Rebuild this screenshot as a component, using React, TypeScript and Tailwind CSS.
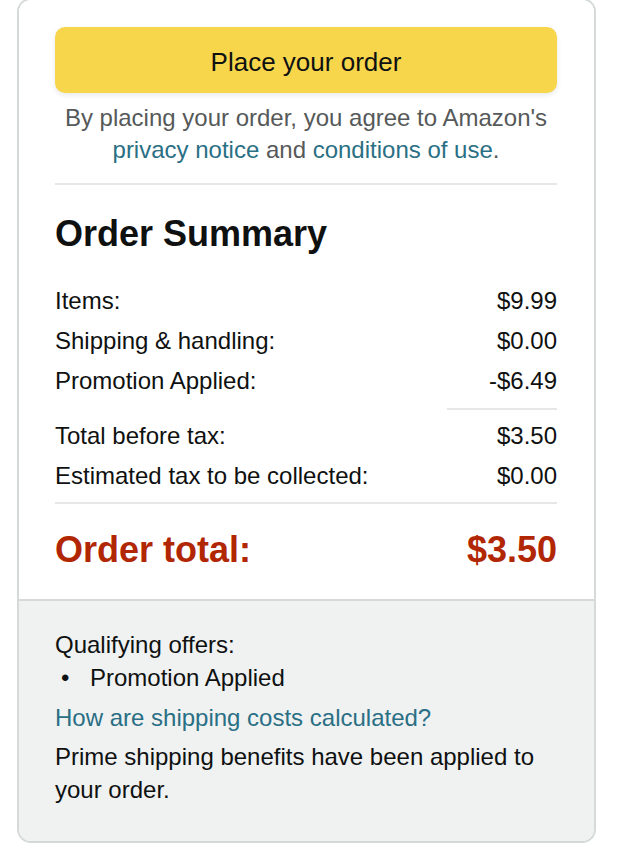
const rowsTop = [
  { label: 'Items:', value: '$9.99' },
  { label: 'Shipping & handling:', value: '$0.00' },
  { label: 'Promotion Applied:', value: '-$6.49' },
];

const rowsBottom = [
  { label: 'Total before tax:', value: '$3.50' },
  { label: 'Estimated tax to be collected:', value: '$0.00' },
];

function Row({ label, value }: { label: string; value: string }) {
  return (
    <div className="flex justify-between leading-[40px] text-[24px] text-[#0f1111]">
      <span>{label}</span>
      <span>{value}</span>
    </div>
  );
}

export default function App() {
  return (
    <div className="bg-white min-h-[856px] font-['Liberation_Sans',Arial,sans-serif]">
      <div className="ml-[17px] -mt-[2px] w-[579px] border-2 border-[#d5d9d9] rounded-[14px] overflow-hidden">
        <div className="pt-[27px] pl-[36px] pr-[37px] pb-[27px] bg-white">
          <button className="w-full h-[66px] pt-[4px] rounded-[10px] bg-[#f8d64c] text-[26px] text-[#0f1111] shadow-[0_2px_5px_rgba(213,217,217,0.6)]">
            Place your order
          </button>
          <p className="mt-[9px] text-center text-[24px] leading-[32px] text-[#565959]">
            By placing your order, you agree to Amazon's{' '}
            <a className="text-[#2a6f84]">privacy notice</a> and{' '}
            <a className="text-[#2a6f84]">conditions of use</a>.
          </p>
          <div className="mt-[17px] h-[2px] bg-[#e7e7e7]" />
          <h2 className="mt-[29px] text-[36px] leading-[40px] font-bold text-[#0f1111]">Order Summary</h2>
          <div className="mt-[27px]">
            {rowsTop.map((r) => (
              <Row key={r.label} {...r} />
            ))}
          </div>
          <div className="mt-[7px] ml-auto w-[110px] h-[2px] bg-[#e7e7e7]" />
          <div className="mt-[6px]">
            {rowsBottom.map((r) => (
              <Row key={r.label} {...r} />
            ))}
          </div>
          <div className="mt-[6px] h-[2px] bg-[#e7e7e7]" />
          <div className="mt-[24px] flex justify-between text-[36px] leading-[44px] font-bold text-[#b12704]">
            <span>Order total:</span>
            <span>$3.50</span>
          </div>
        </div>
        <div className="border-t-2 border-[#d5d9d9] bg-[#f0f2f2] pt-[27px] pl-[36px] pr-[37px] pb-[35px] text-[24px] leading-[33px] text-[#0f1111]">
          <p>Qualifying offers:</p>
          <div className="flex">
            <span className="w-[35px] pl-[6px]">•</span>
            <span>Promotion Applied</span>
          </div>
          <a className="block mt-[7px] text-[#2a6f84]">How are shipping costs calculated?</a>
          <p className="mt-[6px]">Prime shipping benefits have been applied to your order.</p>
        </div>
      </div>
    </div>
  );
}
